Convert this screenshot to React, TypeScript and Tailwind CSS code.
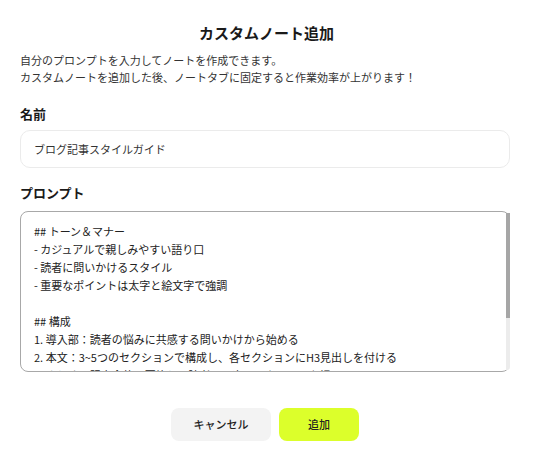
import { useState } from 'react';

const initialPrompt = `## トーン＆マナー
- カジュアルで親しみやすい語り口
- 読者に問いかけるスタイル
- 重要なポイントは太字と絵文字で強調

## 構成
1. 導入部：読者の悩みに共感する問いかけから始める
2. 本文：3~5つのセクションで構成し、各セクションにH3見出しを付ける
3. まとめ：記事全体の要約と、読者への次のアクションを提示`;

export default function App() {
  const [name, setName] = useState('ブログ記事スタイルガイド');
  const [prompt, setPrompt] = useState(initialPrompt);

  return (
    <div
      className="w-[533px] h-[454px] bg-white text-[#1a1a1a] overflow-hidden"
      style={{ fontFamily: '"Noto Sans CJK JP", "Noto Sans", sans-serif' }}
    >
      <div className="px-5 pt-[22px]">
        <h2 className="text-center text-[15px] font-bold leading-[22px]">カスタムノート追加</h2>

        <p className="mt-[8px] text-[11px] leading-[17px] text-[#333]">
          自分のプロンプトを入力してノートを作成できます。
          <br />
          カスタムノートを追加した後、ノートタブに固定すると作業効率が上がります！
        </p>

        <label className="block mt-[18px] text-[13px] font-bold leading-[20px]">名前</label>
        <input
          value={name}
          onChange={(e) => setName(e.target.value)}
          className="mt-[6px] w-[490px] h-[38px] rounded-[10px] border border-[#ebebeb] px-[13px] text-[11px] text-[#333] outline-none"
        />

        <label className="block mt-[15px] text-[13px] font-bold leading-[20px]">プロンプト</label>
        <div className="relative mt-[8px] w-[490px] h-[161px]">
          <textarea
            value={prompt}
            onChange={(e) => setPrompt(e.target.value)}
            className="w-full h-full resize-none rounded-[8px] border border-[#a8a8a8] pl-[13px] pr-2 pt-[10px] text-[11px] leading-[18px] text-[#222] outline-none [scrollbar-width:none]"
          />
          <div className="absolute right-0 top-[2px] bottom-[2px] w-[4px] rounded-r-[3px] bg-[#ececec]">
            <div className="h-[105px] w-full bg-[#a6a6a6]" />
          </div>
        </div>

        <div className="mt-[36px] mr-[3px] flex justify-center gap-2">
          <button className="w-[100px] h-[33px] rounded-[8px] bg-[#f3f3f3] text-[11px] font-medium text-[#222]">
            キャンセル
          </button>
          <button className="w-[80px] h-[33px] rounded-[8px] bg-[#dcff2b] text-[11px] font-medium text-[#222]">
            追加
          </button>
        </div>
      </div>
    </div>
  );
}
